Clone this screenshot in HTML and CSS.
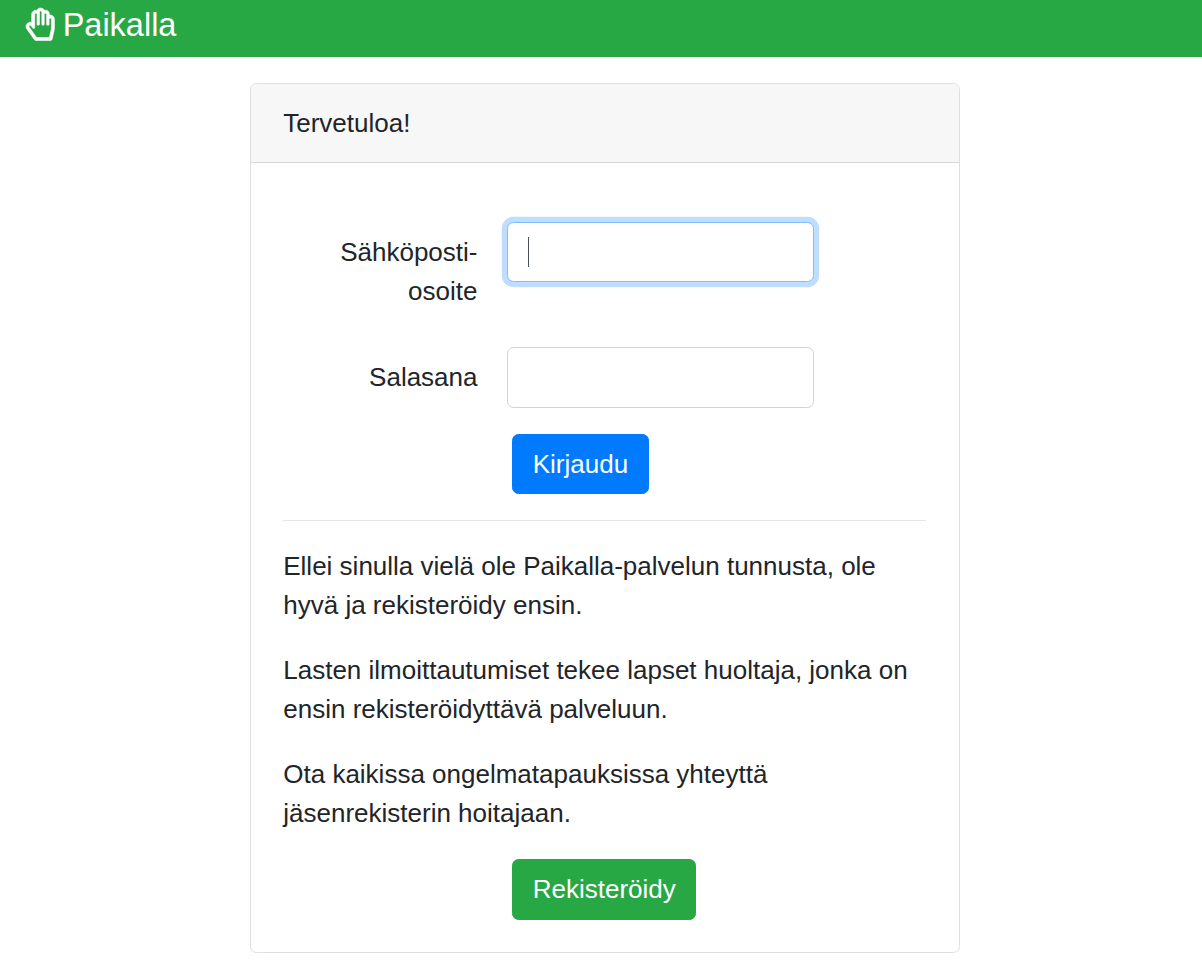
FILE: index.html
```html
<!DOCTYPE html>
<html lang="fi">
<head>
<meta charset="utf-8">
<title>Paikalla</title>
<link rel="stylesheet" href="styles.css">
</head>
<body>
<nav class="navbar">
  <a class="brand"><svg class="brand-icon" viewBox="0 0 448 512" aria-hidden="true"><path d="M372.57 112.641v-10.825c0-43.612-40.52-76.691-83.039-65.546-25.629-49.5-94.09-47.45-117.982.747C130.269 26.456 89.144 57.945 89.144 102v126.13c-19.953-7.427-43.308-5.068-62.083 8.871-29.355 21.796-35.794 63.333-14.55 93.153L132.48 498.65a32 32 0 0 0 26.062 13.366h222.897c14.904 0 27.835-10.289 31.182-24.813l30.184-130.958A203.637 203.637 0 0 0 448 310.564V179c0-40.62-35.523-71.992-75.43-66.359zm27.427 197.922c0 11.731-1.334 23.469-3.965 34.886L368.707 464h-201.92L51.591 302.303c-14.439-20.27 15.023-42.776 29.394-22.605l27.128 38.079c8.995 12.626 29.031 6.287 29.031-9.283V102c0-25.645 36.571-24.81 36.571.691V256c0 8.837 7.163 16 16 16h6.856c8.837 0 16-7.163 16-16V67c0-25.663 36.571-24.81 36.571.691V256c0 8.837 7.163 16 16 16h6.856c8.837 0 16-7.163 16-16V101.125c0-25.672 36.57-24.81 36.57.691V256c0 8.837 7.163 16 16 16h6.857c8.837 0 16-7.163 16-16v-76.309c0-26.242 36.57-25.64 36.57-.691v131.563z"/></svg><span>Paikalla</span></a>
</nav>
<main class="card">
  <header class="card-header">Tervetuloa!</header>
  <div class="card-body">
    <form class="login">
      <div class="form-row">
        <label class="label" for="email">Sähköposti-<br>osoite</label>
        <div class="field"><input class="input input-focus" id="email" type="email"><span class="caret"></span></div>
      </div>
      <div class="form-row">
        <label class="label" for="password">Salasana</label>
        <div class="field"><input class="input" id="password" type="password"></div>
      </div>
      <button class="btn btn-primary" type="button">Kirjaudu</button>
    </form>
    <hr class="divider">
    <p class="text">Ellei sinulla vielä ole Paikalla-palvelun tunnusta, ole hyvä ja rekisteröidy ensin.</p>
    <p class="text">Lasten ilmoittautumiset tekee lapset huoltaja, jonka on ensin rekisteröidyttävä palveluun.</p>
    <p class="text">Ota kaikissa ongelmatapauksissa yhteyttä jäsenrekisterin hoitajaan.</p>
    <button class="btn btn-success" type="button">Rekisteröidy</button>
  </div>
</main>
</body>
</html>
```
FILE: styles.css
```css
* { box-sizing: border-box; }

body {
  margin: 0;
  background: #fff;
  color: #212529;
  font: 26px/39px "Liberation Sans", Arial, sans-serif;
}

.navbar {
  display: flex;
  height: 57px;
  padding-left: 25.5px;
  background: #28a745;
}

.brand {
  display: flex;
  align-items: flex-start;
  gap: 8.7px;
  color: #fff;
  font-size: 32.5px;
  line-height: 50px;
}

.brand-icon {
  width: 28.44px;
  height: 32.5px;
  margin-top: 7.5px;
  overflow: visible;
  fill: currentColor;
  stroke: currentColor;
  stroke-width: 9;
}

.card {
  width: 710px;
  margin: 26px 0 0 250px;
  border: 1px solid #dfdfdf;
  border-radius: 6.5px;
  background: #fff;
}

.card-header {
  padding: 19.5px 32.25px;
  border-bottom: 1px solid #d8d8d8;
  border-radius: 5.5px 5.5px 0 0;
  background: #f7f7f7;
}

.card-body { padding: 32.5px 32.75px 32.5px 32.25px; }

.login { padding-top: 26px; }

.form-row {
  display: grid;
  grid-template-columns: 194.25px 307px;
  column-gap: 29.75px;
  align-items: start;
  margin-bottom: 26px;
}

.label {
  padding: 11px 0 10.5px;
  text-align: right;
}

.field { position: relative; }

.input {
  display: block;
  width: 100%;
  height: 60.5px;
  padding: 9.75px 19.5px;
  border: 1px solid #ced4da;
  border-radius: 6.5px;
  outline: none;
  background: #fff;
  font: inherit;
}

.input-focus {
  border-color: #80bdff;
  box-shadow: 0 0 0 5.2px #bfdeff;
}

.caret {
  position: absolute;
  top: 15px;
  left: 21px;
  width: 1px;
  height: 30px;
  background: #495057;
}

.btn {
  display: block;
  height: 60.5px;
  margin-left: 229px;
  padding: 10px 19.5px 9.5px;
  border: 1px solid transparent;
  border-radius: 6.5px;
  color: #fff;
  font: inherit;
}

.btn-primary { background: #007bff; border-color: #007bff; }
.btn-success { background: #28a745; border-color: #28a745; }

.divider {
  margin: 26px 0;
  border: 0;
  border-top: 1px solid #e5e5e5;
}

.text { margin: 0 0 26px; }
```
